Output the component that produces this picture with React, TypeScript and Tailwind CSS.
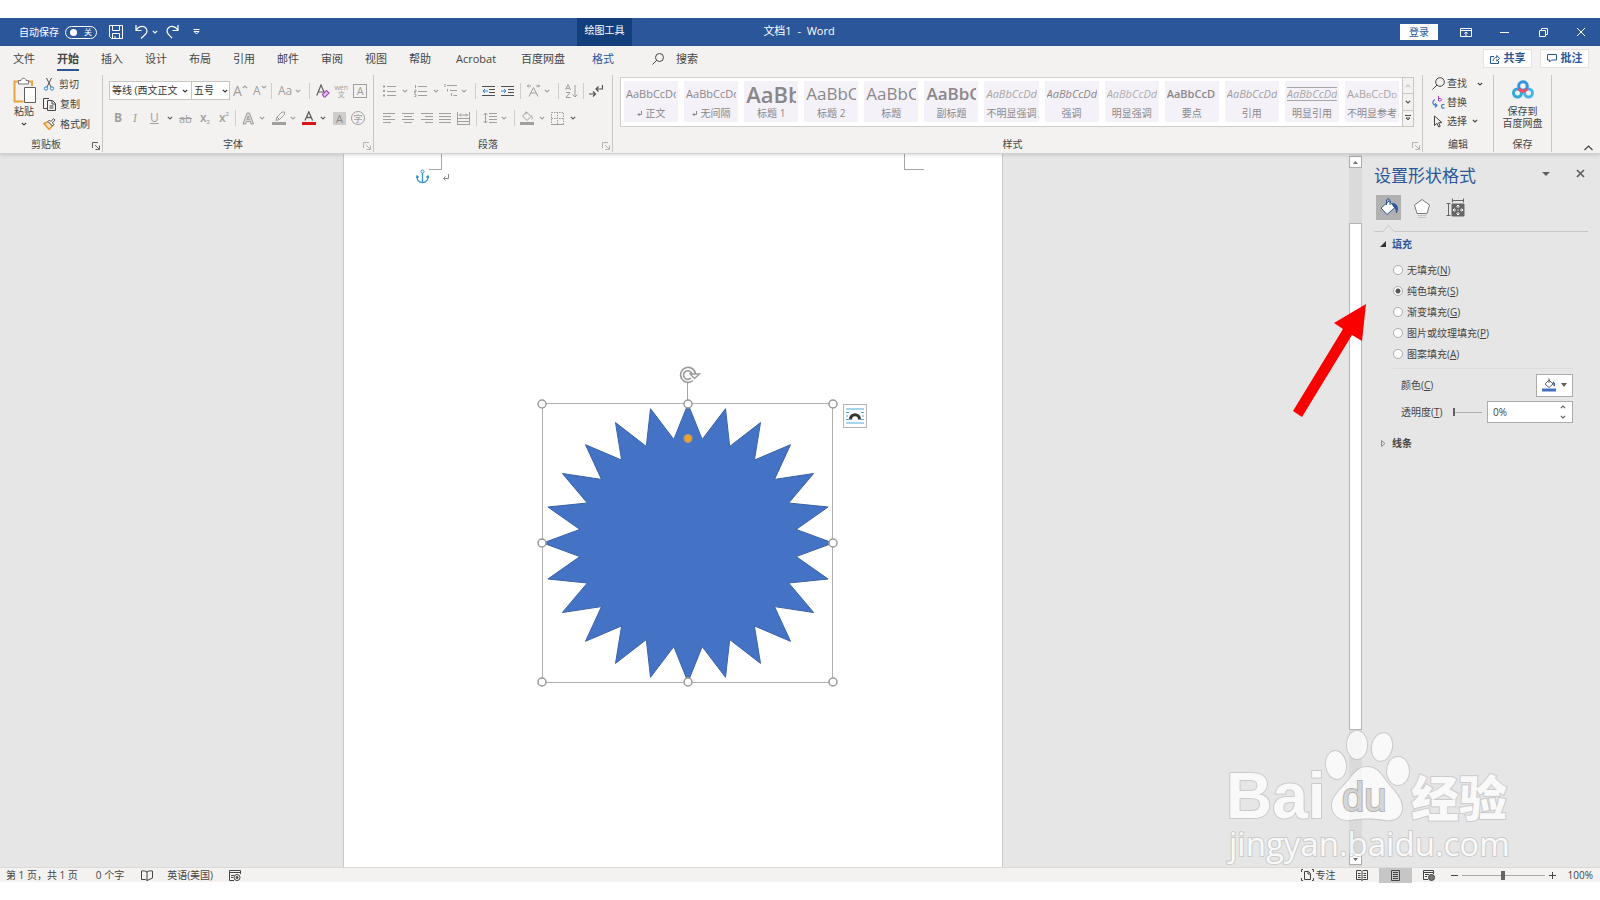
import { useState, type ReactNode } from "react";

const tabs = ["文件", "开始", "插入", "设计", "布局", "引用", "邮件", "审阅", "视图", "帮助"];

const styleCards = [
  { name: "正文", mark: true, sample: "AaBbCcDd", preview: "text-[11px]" },
  { name: "无间隔", mark: true, sample: "AaBbCcDd", preview: "text-[11px]" },
  { name: "标题 1", sample: "AaBb", preview: "text-[22px] font-semibold" },
  { name: "标题 2", sample: "AaBbC", preview: "text-[17px]" },
  { name: "标题", sample: "AaBbC", preview: "text-[17px]" },
  { name: "副标题", sample: "AaBbC", preview: "text-[17px] font-semibold" },
  { name: "不明显强调", sample: "AaBbCcDd", preview: "text-[11px] italic text-[#a8a5a8]" },
  { name: "强调", sample: "AaBbCcDd", preview: "text-[11px] italic" },
  { name: "明显强调", sample: "AaBbCcDd", preview: "text-[11px] italic text-[#b0adb0]" },
  { name: "要点", sample: "AaBbCcD", preview: "text-[11px] font-semibold" },
  { name: "引用", sample: "AaBbCcDd", preview: "text-[11px] italic text-[#a09da0]" },
  { name: "明显引用", sample: "AaBbCcDd", lined: true, preview: "text-[11px] italic text-[#a8a5a8]" },
  { name: "不明显参考", sample: "AaBbCcDd", preview: "text-[11px] text-[#a8a5a8] [font-variant:small-caps]" },
];

const fills = [
  { label: "无填充", hotkey: "N" },
  { label: "纯色填充", hotkey: "S" },
  { label: "渐变填充", hotkey: "G" },
  { label: "图片或纹理填充", hotkey: "P" },
  { label: "图案填充", hotkey: "A" },
];

function Icon({ w, h, className = "", children }: { w: number; h: number; className?: string; children: ReactNode }) {
  return (
    <svg
      width={w}
      height={h}
      viewBox={`0 0 ${w} ${h}`}
      fill="none"
      stroke="currentColor"
      className={`block shrink-0 ${className}`}
      aria-hidden="true"
    >
      {children}
    </svg>
  );
}

function Chevron({ className = "" }: { className?: string }) {
  return (
    <Icon w={6} h={4} className={className}>
      <path d="M.8.8 3 3 5.2.8" strokeWidth="1.1" />
    </Icon>
  );
}

function Tool({ label, className = "", children }: { label: string; className?: string; children: ReactNode }) {
  return (
    <button type="button" aria-label={label} className={`flex shrink-0 items-center ${className}`}>
      {children}
    </button>
  );
}

function Divider({ className = "" }: { className?: string }) {
  return <span className={`h-4 w-px shrink-0 bg-[#d0cecc] ${className}`} />;
}

function Launcher({ className = "text-[#b5b3b1]" }: { className?: string }) {
  return (
    <button type="button" aria-label="更多选项" className={`block ${className}`}>
      <Icon w={8} h={8}>
        <path d="M.5 6V.5H6M3 3l4 4M7.5 3.5v4h-4" />
      </Icon>
    </button>
  );
}

function Group({ label, className = "", launcher, children }: { label: string; className?: string; launcher?: ReactNode; children: ReactNode }) {
  return (
    <section className={`flex h-[77px] flex-col border-r border-[#c8c6c4] ${className}`}>
      <div className="flex-1">{children}</div>
      <div className="flex h-4 items-center">
        <span className="flex-1 text-center text-[10px]">{label}</span>
        {launcher && <span className="w-[10px] pt-1">{launcher}</span>}
      </div>
    </section>
  );
}

function TitleBar() {
  return (
    <header className="flex h-7 items-stretch bg-[#2b579a] text-[10px] text-white">
      <div className="flex flex-1 items-center">
        <div className="flex w-[577px] items-center pl-[19px]">
          <span id="autosave">自动保存</span>
          <button
            type="button"
            role="switch"
            aria-checked="false"
            aria-labelledby="autosave"
            className="ml-[6px] flex h-[13px] w-8 items-center justify-between rounded-full border border-white px-1 text-[8px] leading-none"
          >
            <span className="size-[7px] rounded-full bg-white" />关
          </button>
          <Tool label="保存" className="ml-3">
            <Icon w={14} h={14}>
              <path d="M.5.5h13v13h-11l-2-2zM3.5.5v5h7v-5M3.5 13.5v-5h7v5M6 13v-2" />
            </Icon>
          </Tool>
          <Tool label="撤消" className="ml-3 gap-1">
            <Icon w={13} h={14}>
              <path d="M1 0v5.500h5.500M1.300 5C3.500 1.500 7.500.5 10 2.300c2.500 2 2.500 5 .5 7L6 13.500" strokeWidth="1.200" />
            </Icon>
            <Chevron />
          </Tool>
          <Tool label="恢复" className="ml-[8px]">
            <Icon w={13} h={14}>
              <path d="M12 0v5.500H6.500M11.700 5C9.500 1.500 5.500.5 3 2.300c-2.500 2-2.500 5-.5 7L6 13" strokeWidth="1.200" />
            </Icon>
          </Tool>
          <Tool label="自定义快速访问工具栏" className="ml-[14px]">
            <Icon w={7} h={6}>
              <path d="M.5.5h6M1 2.500l2.500 2.500L6 2.500z" />
            </Icon>
          </Tool>
        </div>
        <div className="flex h-full w-[55px] items-center justify-center bg-[#133f7c] pb-[3px]">绘图工具</div>
      </div>
      <h1 className="ml-3 flex items-center pb-[2px] text-[11px] whitespace-pre">文档1  -  Word</h1>
      <div className="flex flex-1 items-center justify-end pr-[14px]">
        <button type="button" className="mr-[22px] h-4 w-[38px] bg-white leading-4 text-[#2b579a]">登录</button>
        <Tool label="功能区显示选项" className="mr-[28px]">
          <Icon w={12} h={9}>
            <path d="M.5.5h11v8H.5zM.5 2.500h11M6 8V4M4.300 5.500 6 4l1.700 1.500" />
          </Icon>
        </Tool>
        <Tool label="最小化" className="mr-[30px]">
          <Icon w={9} h={9}>
            <path d="M0 4.500h9" />
          </Icon>
        </Tool>
        <Tool label="向下还原" className="mr-[28px]">
          <Icon w={9} h={9}>
            <path d="M.5 2.500h6v6h-6zM2.500 2.500v-2h6v6h-2" />
          </Icon>
        </Tool>
        <Tool label="关闭">
          <Icon w={10} h={10}>
            <path d="M1 1l8 8M9 1 1 9" />
          </Icon>
        </Tool>
      </div>
    </header>
  );
}

function TabRow() {
  return (
    <nav className="flex h-[29px] items-start gap-[22px] pr-[11px] pl-[13px] text-[11px]">
      {tabs.map((tab) => (
        <a
          key={tab}
          href="#"
          className={
            tab === "开始"
              ? "mt-1 border-b-2 border-[#2b579a] pb-[2px] leading-[17px] font-bold"
              : "mt-1 leading-[17px]"
          }
        >
          {tab}
        </a>
      ))}
      <a href="#" className="mt-1 ml-[3px] leading-[17px]">Acrobat</a>
      <a href="#" className="mt-1 ml-[3px] leading-[17px]">百度网盘</a>
      <a href="#" className="mt-1 ml-[5px] leading-[17px] text-[#2b579a]">格式</a>
      <button type="button" className="mt-1 ml-4 flex items-center gap-3 leading-[17px]">
        <Icon w={12} h={12}>
          <circle cx="7.500" cy="4.500" r="4" />
          <path d="M4.700 7.300.5 11.500" />
        </Icon>
        搜索
      </button>
      <div className="mt-[3px] ml-auto flex gap-2 font-bold text-[#2b579a]">
        <button type="button" className="flex h-[19px] w-[49px] items-center justify-center gap-1 border border-[#e5e3e1] bg-white">
          <Icon w={10} h={10}>
            <path d="M4 2.500H.5v7h8V7M3 7c.3-2.500 1.700-3.500 3.800-3.500V1.500l2.700 3-2.700 2.700V5.300" />
          </Icon>
          共享
        </button>
        <button type="button" className="flex h-[19px] w-[49px] items-center justify-center gap-1 border border-[#e5e3e1] bg-white">
          <Icon w={10} h={9}>
            <path d="M.5.5h9v5.500H4.500L2.500 8V6h-2z" />
          </Icon>
          批注
        </button>
      </div>
    </nav>
  );
}

function Clipboard() {
  return (
    <Group label="剪贴板" className="w-[103px] shrink-0" launcher={<Launcher className="text-[#605e5c]" />}>
      <div className="flex">
        <button type="button" className="ml-3 flex w-6 flex-col items-center pt-[2px] text-[10px] leading-3">
          <Icon w={24} h={26}>
            <path d="M7 4.500H2.500v20h9M16 4.500h4V9" stroke="#e8a33d" strokeWidth="2" />
            <path d="M6.500 7V3.500H9c0-3 5-3 5 0h2.500V7z" fill="#fff" stroke="#767472" />
            <path d="M12.500 10.500h11v15h-11z" fill="#fff" stroke="#605e5c" />
          </Icon>
          <span className="mt-[2px]">粘贴</span>
          <Chevron className="mt-[5px]" />
        </button>
        <div className="ml-[7px] flex flex-col text-[10px]">
          <button type="button" className="flex h-[19px] items-center gap-1">
            <Icon w={12} h={13}>
              <path d="M3.500 0 8 9M8.500 0 4 9" stroke="#505050" />
              <circle cx="3" cy="10.500" r="1.700" stroke="#2b88c8" />
              <circle cx="9" cy="10.500" r="1.700" stroke="#2b88c8" />
            </Icon>
            剪切
          </button>
          <button type="button" className="flex h-5 items-center gap-1">
            <Icon w={13} h={13}>
              <path d="M4 10.500H.5V.5H6" />
              <path d="M4.500 2.500h5l3 3v7h-8zM9 3v3h3M6.500 8h4M6.500 10h4" />
            </Icon>
            复制
          </button>
          <button type="button" className="flex h-5 items-center gap-1">
            <Icon w={13} h={12}>
              <path d="M1 5.500 5.500 3.500 9.500 8 6 11.500z" fill="#fbe3bd" stroke="#e8922d" strokeWidth="1.400" />
              <path d="M5 3.500 9.500 8 11 6.500 9.300 5 12 2 10.500.7 8 3.500 6.500 2z" fill="#fff" stroke="#505050" />
            </Icon>
            格式刷
          </button>
        </div>
      </div>
    </Group>
  );
}

function FontGroup() {
  return (
    <Group label="字体" className="w-[271px] shrink-0" launcher={<Launcher />}>
      <div className="flex h-[27px] items-center pt-1 pl-[6px] text-[#a19f9d]">
        <div className="relative flex text-[#333]">
          <select aria-label="字体" className="h-[19px] w-[83px] appearance-none border border-[#c8c6c4] bg-white pl-[2px] text-[10px]">
            <option>等线 (西文正文</option>
          </select>
          <Chevron className="pointer-events-none absolute top-2 right-1" />
        </div>
        <div className="relative -ml-px flex text-[#333]">
          <select aria-label="字号" className="h-[19px] w-[39px] appearance-none border border-[#c8c6c4] bg-white pl-[2px] text-[10px]">
            <option>五号</option>
          </select>
          <Chevron className="pointer-events-none absolute top-2 right-[2px]" />
        </div>
        <Tool label="增大字号" className="ml-[3px] w-5 text-[14px] leading-none">
          A<Chevron className="mb-2 rotate-180" />
        </Tool>
        <Tool label="减小字号" className="w-[18px] text-[12px] leading-none">
          A<Chevron className="mb-2" />
        </Tool>
        <Divider />
        <Tool label="更改大小写" className="ml-[6px] gap-[3px] text-[12px] leading-none">
          Aa<Chevron />
        </Tool>
        <Divider className="ml-2" />
        <Tool label="清除所有格式" className="ml-[6px]">
          <Icon w={14} h={14}>
            <path d="M.8 11.500 5 1l3.500 8M2.300 8h5" stroke="#605e5c" strokeWidth="1.200" />
            <path d="m6.500 10.500 4-4 2.500 2.500-4 4H8z" fill="#e9cdf2" stroke="#a349b8" strokeWidth="1.200" />
          </Icon>
        </Tool>
        <Tool label="拼音指南" className="ml-1 w-[14px] flex-col text-[7px] leading-[7px]">
          <span>wén</span>
          <span>文</span>
        </Tool>
        <Tool label="字符边框" className="ml-[5px] size-[14px] justify-center border border-current text-[11px] leading-none">
          A
        </Tool>
      </div>
      <div className="mt-[3px] flex h-[26px] items-center pl-[11px] text-[12px] leading-none text-[#a19f9d]">
        <Tool label="加粗" className="w-[19px] font-bold">B</Tool>
        <Tool label="倾斜" className="w-[17px] font-serif italic">I</Tool>
        <Tool label="下划线" className="w-[27px] justify-between">
          <span className="underline">U</span>
          <Chevron className="mr-1 text-[#605e5c]" />
        </Tool>
        <Tool label="删除线" className="ml-[2px] w-[21px] text-[11px] line-through">ab</Tool>
        <Tool label="下标" className="w-[19px] font-semibold">
          x<span className="mt-2 text-[6px]">2</span>
        </Tool>
        <Tool label="上标" className="w-[16px] font-semibold">
          x<span className="mb-2 text-[6px]">2</span>
        </Tool>
        <Divider />
        <Tool label="文本效果" className="ml-[6px] gap-[4px]">
          <Icon w={13} h={13}>
            <path d="m1 12 4-11h2.500l4 11H9L8.200 9.500H4.500L3.600 12zM5.200 7.500h2.200L6.300 4z" fill="#d9d7d5" />
          </Icon>
          <Chevron />
        </Tool>
        <Tool label="文本突出显示颜色" className="ml-[7px] gap-[4px]">
          <Icon w={14} h={14}>
            <path d="M0 12.500h14" strokeWidth="3" />
            <path d="M4 9.500 5 6l5-5h2.500v2.500l-5 5zM5 6l2.500 2.500" />
          </Icon>
          <Chevron />
        </Tool>
        <Tool label="字体颜色" className="ml-[6px] gap-1 text-[#605e5c]">
          <Icon w={14} h={14}>
            <path d="M0 12.500h14" stroke="#d91616" strokeWidth="3" />
            <path d="M3 9.500 6.800.8l3.800 8.700M4.300 6.500h5" strokeWidth="1.300" />
          </Icon>
          <Chevron />
        </Tool>
        <Tool label="字符底纹" className="ml-[7px] size-[13px] justify-center bg-[#cfcdcb] text-[11px] text-[#8a8886]">A</Tool>
        <Tool label="带圈字符" className="ml-[5px] size-[14px] justify-center rounded-full border border-current text-[9px]">字</Tool>
      </div>
    </Group>
  );
}

function Lines({ d, h = 12 }: { d: string; h?: number }) {
  return (
    <Icon w={13} h={h}>
      <path d={d} />
    </Icon>
  );
}

function ParagraphGroup() {
  return (
    <Group label="段落" className="w-[239px] shrink-0" launcher={<Launcher />}>
      <div className="flex h-[27px] items-center pt-1 pl-[9px] text-[#a19f9d]">
        <Tool label="项目符号" className="gap-[6px]">
          <Icon w={13} h={12}>
            <path d="M0 1.500h2M0 6h2M0 10.500h2" strokeWidth="2" />
            <path d="M4 1.500h9M4 6.500h9M4 10.500h9" />
          </Icon>
          <Chevron />
        </Tool>
        <Tool label="编号" className="ml-[6px] gap-[6px]">
          <Icon w={13} h={12}>
            <path d="M1.500 0v3M.5 5h1.500v1.500H.5V8H2M.5 9.500H2v2H.5M4 1.500h9M4 6.500h9M4 10.500h9" />
          </Icon>
          <Chevron />
        </Tool>
        <Tool label="多级列表" className="ml-[5px] gap-[4px]">
          <Icon w={13} h={13}>
            <path d="M1 0v3M3 1.500h10M3.500 5v2.500M6 6.500h7M7.500 9v3M9.500 11.500H13" />
          </Icon>
          <Chevron />
        </Tool>
        <Divider className="ml-2" />
        <Tool label="减少缩进量" className="ml-[6px] text-[#505050]">
          <Icon w={13} h={12}>
            <path d="M0 1.500h13M7 4.500h6M7 7.500h6M0 10.500h13" />
            <path d="M6 6H1m2-2L1 6l2 2" stroke="#2b88d8" />
          </Icon>
        </Tool>
        <Tool label="增加缩进量" className="ml-[6px] text-[#505050]">
          <Icon w={13} h={12}>
            <path d="M0 1.500h13M7 4.500h6M7 7.500h6M0 10.500h13" />
            <path d="M0 6h5M3 4l2 2-2 2" stroke="#2b88d8" />
          </Icon>
        </Tool>
        <Divider className="ml-[6px]" />
        <Tool label="中文版式" className="ml-[6px] gap-[4px]">
          <Icon w={13} h={13}>
            <path d="m2 12.500 4.500-9 4.500 9M3.800 9h5.400M0 2h4M2 .5.500 2 2 3.500M13 2H9m2-1.500L12.500 2 11 3.500" />
          </Icon>
          <Chevron />
        </Tool>
        <Divider className="ml-2" />
        <Tool label="排序" className="ml-[6px]">
          <Icon w={13} h={14}>
            <path d="M.5 6 3 .5 5.500 6M1.300 4.300h3.400M1 8.500h4l-4 5h4.500M10 1v12M7.500 10.500 10 13l2.500-2.500" />
          </Icon>
        </Tool>
        <Divider className="ml-[5px]" />
        <Tool label="显示编辑标记" className="ml-[5px] text-[#505050]">
          <Icon w={14} h={14}>
            <path d="M0 10h6M4 7.500 6.500 10 4 12.500M13.500 1v4H7.500M9.500 2.500 7 5l2.500 2.500" strokeWidth="1.200" />
          </Icon>
        </Tool>
      </div>
      <div className="mt-[3px] flex h-[26px] items-center pl-[9px] text-[#a19f9d]">
        <Tool label="左对齐"><Lines d="M0 1.500h12M0 4.500h8M0 7.500h12M0 10.500h8" /></Tool>
        <Tool label="居中" className="ml-[6px]"><Lines d="M0 1.500h12M2 4.500h8M0 7.500h12M2 10.500h8" /></Tool>
        <Tool label="右对齐" className="ml-[6px]"><Lines d="M0 1.500h12M4 4.500h8M0 7.500h12M4 10.500h8" /></Tool>
        <Tool label="两端对齐" className="ml-[5px]"><Lines d="M0 1.500h12M0 4.500h12M0 7.500h12M0 10.500h12" /></Tool>
        <Tool label="分散对齐" className="ml-[5px]"><Lines h={13} d="M.5 0v13M12.500 0v13M2 3h9M4 1.500 2.500 3 4 4.500M9 1.500 10.500 3 9 4.500M1 6.500h11M1 9.500h11M1 12.500h11" /></Tool>
        <Divider className="ml-[6px]" />
        <Tool label="行和段落间距" className="ml-[6px] gap-1">
          <Icon w={14} h={12}>
            <path d="M2.500 1v10M.5 3l2-2 2 2M.5 9l2 2 2-2M6 1.500h8M6 4.500h8M6 7.500h8M6 10.500h8" />
          </Icon>
          <Chevron />
        </Tool>
        <Divider className="ml-[7px]" />
        <Tool label="底纹" className="ml-[5px] gap-[5px]">
          <Icon w={14} h={14}>
            <path d="M0 12.500h14" strokeWidth="3" />
            <path d="M6.500 1 11 5.500l-4 4L2.500 5zM6 .5v3M11 4.500c1.500 1 1.500 2.500 1 4" />
          </Icon>
          <Chevron />
        </Tool>
        <Tool label="边框" className="ml-[6px] gap-[6px]">
          <Icon w={13} h={13}>
            <path d="M.5.5h12v12H.5zM6.500.5v12M.5 6.500h12" strokeDasharray="1.500 1" />
            <path d="M0 12.500h13" />
          </Icon>
          <Chevron className="text-[#605e5c]" />
        </Tool>
      </div>
    </Group>
  );
}

function StylesGroup() {
  return (
    <Group label="样式" className="min-w-0 flex-1" launcher={<Launcher />}>
      <div className="mt-[2px] mr-2 ml-[7px] flex h-[50px] border border-[#d0cecc] bg-white">
        <div className="flex min-w-0 flex-1 gap-[6px] p-[3px]">
          {styleCards.map((card) => (
            <button key={card.name} type="button" className="flex h-[41px] min-w-0 flex-1 flex-col items-center bg-[#f5f1f8] text-[#8a878a]">
              <span className="flex h-[26px] w-full items-center overflow-hidden px-[2px]">
                <span
                  className={`w-full overflow-hidden text-left whitespace-nowrap ${card.preview} ${
                    card.lined ? "border-y border-[#a8a5a8] leading-3" : "leading-[26px]"
                  }`}
                >
                  {card.sample}
                </span>
              </span>
              <span className="flex items-center gap-1 text-[10px] leading-[13px] whitespace-nowrap">
                {card.mark && (
                  <Icon w={5} h={6}>
                    <path d="M4.500 0v3.500H1M2.500 2 1 3.500 2.500 5" />
                  </Icon>
                )}
                {card.name}
              </span>
            </button>
          ))}
        </div>
        <div className="-my-px -mr-px flex w-3 flex-col border border-[#c8c6c4] bg-[#f3f2f1] text-[#505050]">
          <button type="button" aria-label="上一行" className="flex flex-1 items-center justify-center text-[#c8c6c4]"><Chevron className="rotate-180" /></button>
          <button type="button" aria-label="下一行" className="flex flex-1 items-center justify-center border-y border-[#c8c6c4]"><Chevron /></button>
          <button type="button" aria-label="其他样式" className="flex flex-1 items-center justify-center">
            <Icon w={6} h={6}>
              <path d="M0 .5h6M1 3l2 2 2-2z" />
            </Icon>
          </button>
        </div>
      </div>
    </Group>
  );
}

function Ribbon() {
  return (
    <div className="relative z-10 border-b border-[#d2d0ce] bg-[#f3f2f1] text-[#444] shadow-[0_1px_4px_rgba(0,0,0,0.15)]">
      <TabRow />
      <div className="flex h-[78px]">
        <Clipboard />
        <FontGroup />
        <ParagraphGroup />
        <StylesGroup />
        <Group label="编辑" className="w-[71px] shrink-0">
          <div className="flex flex-col pl-[9px] text-[10px]">
            <button type="button" className="flex h-[17px] items-center gap-[2px]">
              <Icon w={13} h={13}>
                <circle cx="8" cy="5" r="4.300" />
                <path d="M5 8 .5 12.500" />
              </Icon>
              查找
              <Chevron className="ml-2" />
            </button>
            <button type="button" className="flex h-5 items-center gap-[2px]">
              <Icon w={13} h={13}>
                <path d="M6.500 0v5M6.500 2.500h1.500q1.500 0 1.500 1.200T8 5H6.500" stroke="#b146c2" />
                <path d="M12.500 8.500q-3-.5-3 1.800t3 1.700M3 3.500C0 5 0 9 4.500 9.500M3 7.500l2 2-2 2" stroke="#3d7fc4" strokeWidth="1.200" />
              </Icon>
              替换
            </button>
            <button type="button" className="flex h-[18px] items-center gap-[2px]">
              <Icon w={13} h={13}>
                <path d="M2.500 1v9.500L5 8.300l1.700 3.700 1.500-.7L6.600 7.700H10z" />
              </Icon>
              选择
              <Chevron className="ml-[3px]" />
            </button>
          </div>
        </Group>
        <Group label="保存" className="w-[58px] shrink-0">
          <button type="button" className="flex w-full flex-col items-center pt-[5px] text-[10px] leading-3">
            <Icon w={22} h={19}>
              <circle cx="5.500" cy="13" r="4" stroke="#2fa8e0" strokeWidth="3" />
              <circle cx="16.500" cy="13" r="4" stroke="#45b5e8" strokeWidth="3" />
              <circle cx="11" cy="6" r="4.300" stroke="#2f93e6" strokeWidth="3" />
              <path d="M7 8.500a4.300 4.300 0 0 0 8 0" stroke="#ee4f67" strokeWidth="3" />
            </Icon>
            <span className="mt-[6px]">保存到</span>
            <span>百度网盘</span>
          </button>
        </Group>
        <div className="flex w-[48px] shrink-0 items-end justify-end pr-[7px] pb-[2px]">
          <Tool label="折叠功能区">
            <Icon w={9} h={6}>
              <path d="m.5 5 4-4 4 4" strokeWidth="1.200" />
            </Icon>
          </Tool>
        </div>
      </div>
    </div>
  );
}

// 24-point star, inner radius is three quarters of the outer one
const starPoints = Array.from({ length: 48 }, (_, i) => {
  const k = i % 2 === 0 ? 1 : 0.752;
  const a = (i * Math.PI) / 24;
  return `${(146 + Math.sin(a) * 145 * k).toFixed(1)},${(174 - Math.cos(a) * 139 * k).toFixed(1)}`;
}).join(" ");

const handles = [
  [0, 35], [146, 35], [291, 35],
  [0, 174], [291, 174],
  [0, 313], [146, 313], [291, 313],
];

function Star() {
  return (
    <svg width="291" height="313" viewBox="0 0 291 313" className="absolute top-[215px] left-[198px] overflow-visible">
      <polygon points={starPoints} fill="#4472c4" stroke="#3a62a8" />
      <path d="M145.500 34V14" stroke="#a6a6a6" />
      <rect x=".5" y="34.500" width="290" height="279" fill="none" stroke="#b0b0b0" />
      {handles.map(([x, y]) => (
        <circle key={`${x}-${y}`} cx={x} cy={y} r="4" fill="#fff" stroke="#9a9a9a" strokeWidth="1.500" />
      ))}
      <circle cx="146" cy="69.500" r="4" fill="#eda12c" stroke="#a39a85" strokeWidth="1.200" />
      <g fill="none" stroke="#9b9b9b">
        <circle cx="146" cy="6" r="6.500" fill="#fff" stroke="none" />
        <path d="M153.500 5a7.500 7.500 0 1 0-2.500 6.500" strokeWidth="1.600" />
        <path d="M150 5a4.300 4.300 0 1 0-1 4" strokeWidth="1.600" />
        <path d="M148 5h9.500l-5 4.500z" fill="#fff" strokeWidth="1.300" />
      </g>
    </svg>
  );
}

function Page() {
  return (
    <article className="relative mx-auto h-full w-[660px] border-x border-[#c9c9c9] bg-white">
      <span className="absolute top-0 left-[78px] h-4 w-5 border-r border-b border-[#a6a6a6]" />
      <span className="absolute top-0 left-[560px] h-4 w-5 border-b border-l border-[#a6a6a6]" />
      <Icon w={13} h={15} className="absolute top-[15px] left-[72px] bg-white text-[#3a93cc]">
        <circle cx="6.500" cy="2.500" r="1.500" />
        <path d="M6.500 4v9.500M1 7.500c0 4 2 6 5.500 6s5.500-2 5.500-6M.3 9 1 7l1.700 1.500M12.700 9 12 7l-1.700 1.500" strokeWidth="1.300" />
      </Icon>
      <Icon w={8} h={8} className="absolute top-[20px] left-[98px] text-[#8a8a8a]">
        <path d="M6.500 0v4.500h-5M3.500 2.500l-2 2 2 2" />
      </Icon>
      <Star />
      <button type="button" aria-label="布局选项" className="absolute top-[250px] left-[499px] flex size-6 items-center justify-center border border-[#b4b4b4] bg-white">
        <Icon w={18} h={16}>
          <path d="M0 1h18M0 15h18" stroke="#4fa9d8" />
          <path d="M0 4.500h3M15 4.500h3M0 8h2M16 8h2M0 11.500h3M15 11.500h3" stroke="#4fa9d8" />
          <path d="M4.500 11.500c0-6.500 9-6.500 9 0" stroke="#333" strokeWidth="3" />
        </Icon>
      </button>
    </article>
  );
}

function ScrollBar() {
  return (
    <div className="flex w-[13px] shrink-0 flex-col bg-[#dadada] pt-[2px] text-[#707070]">
      <button type="button" aria-label="向上滚动" className="flex h-3 items-center justify-center border border-[#ababab] bg-white">
        <Icon w={5} h={3}><path d="M0 3 2.500 0 5 3z" fill="currentColor" stroke="none" /></Icon>
      </button>
      <div className="flex flex-1 flex-col">
        <div className="h-[8%]" />
        <div className="h-[74%] border border-[#b5b5b5] bg-white" />
      </div>
      <button type="button" aria-label="向下滚动" className="mb-[2px] flex h-3 items-center justify-center border border-[#ababab] bg-white">
        <Icon w={5} h={3}><path d="M0 0 2.500 3 5 0z" fill="currentColor" stroke="none" /></Icon>
      </button>
    </div>
  );
}

function FormatPane() {
  const [fill, setFill] = useState("S");

  return (
    <aside className="w-[238px] shrink-0 pt-3 pl-3 text-[10px] text-[#444]">
      <div className="flex h-5 items-center pr-[15px]">
        <h2 className="flex-1 text-[17px] leading-5 text-[#2b579a]">设置形状格式</h2>
        <Tool label="任务窗格选项" className="mb-1 text-[#606060]">
          <Icon w={8} h={4}><path d="M0 0h8L4 4z" fill="currentColor" stroke="none" /></Icon>
        </Tool>
        <Tool label="关闭窗格" className="mb-[5px] ml-[26px] text-[#606060]">
          <Icon w={9} h={9}><path d="m1 1 7 7M8 1 1 8" strokeWidth="1.700" /></Icon>
        </Tool>
      </div>
      <div className="mt-[9px] ml-[2px] flex h-[25px] items-center">
        <Tool label="填充与线条" className="size-[25px] justify-center bg-[#b1b1b1]">
          <Icon w={20} h={19}>
            <path d="m2 10 8-7 6 6.500-8 7z" fill="#fff" stroke="#2b579a" />
            <path d="M7.500 7V3c0-3 3.500-3 3.500 0v4" stroke="#2b579a" />
            <path d="M13.500 5.500c4.500 0 6 4 4 9.500 0-3-1-5-2.500-6z" fill="#2b579a" stroke="#2b579a" />
          </Icon>
        </Tool>
        <Tool label="效果" className="ml-3">
          <Icon w={18} h={20}>
            <path d="M9 1.500 16.500 7 14 15.500H4L1.500 7z" fill="#fff" stroke="#7a7a7a" />
            <path d="M4.500 17.500h9M5 19.500h8" stroke="#c4c4c4" />
          </Icon>
        </Tool>
        <Tool label="布局属性" className="ml-[15px] text-[#666]">
          <Icon w={19} h={19}>
            <path d="M6 2.500h12M6.500.5v4M17.500.5v4M2.500 5.500v12M.5 5.500h4M.5 17.500h4" />
            <path d="M6 6h12v12H6z" fill="#666" />
            <path d="M12 7v3M12 14v3M7 12h3M14 12h3M10.500 8.500 12 7l1.500 1.500M10.500 15.500 12 17l1.500-1.500M8.500 10.500 7 12l1.500 1.500M15.500 10.500 17 12l-1.500 1.500M11.500 12h1" stroke="#fff" />
          </Icon>
        </Tool>
      </div>
      <div className="mr-3 flex h-3 items-end">
        <span className="w-[9px] border-b border-[#c8c8c8]" />
        <Icon w={11} h={7}>
          <path d="m0 6.500 5.500-6 5.500 6" stroke="#c8c8c8" />
        </Icon>
        <span className="flex-1 border-b border-[#c8c8c8]" />
      </div>
      <button type="button" className="mt-1 ml-[6px] flex h-4 items-center gap-[6px] font-bold text-[#2b579a]">
        <Icon w={6} h={6}><path d="M6 0v6H0z" fill="#333" stroke="none" /></Icon>
        填充
      </button>
      <fieldset className="mt-[7px] ml-[19px]">
        <legend className="sr-only">填充</legend>
        {fills.map((f) => (
          <label key={f.hotkey} className="flex h-[21px] items-center gap-1 leading-none">
            <input
              type="radio"
              name="fill"
              checked={fill === f.hotkey}
              onChange={() => setFill(f.hotkey)}
              className="size-[10px] appearance-none rounded-full border border-[#ababab] bg-white checked:bg-[radial-gradient(circle,#555_2px,#fff_3px)]"
            />
            <span>{f.label}(<u>{f.hotkey}</u>)</span>
          </label>
        ))}
      </fieldset>
      <div className="mt-1 mr-[27px] ml-[19px] border-t border-[#dcdcdc]">
        <div className="mt-[5px] flex h-[22px] items-center justify-between pl-2">
          <span>颜色(<u>C</u>)</span>
          <Tool label="颜色" className="h-[23px] w-[37px] justify-center gap-[5px] border border-[#ababab] bg-white text-[#606060]">
            <Icon w={14} h={14}>
              <path d="M0 12h14" stroke="#4472c4" strokeWidth="3" />
              <path d="m3 6 4-4 4 4-4 3.500zM7 5V.5" stroke="#606060" />
              <path d="M11 4c1.500 1 1.500 2.500 1 4" stroke="#2b579a" strokeWidth="1.500" />
            </Icon>
            <Icon w={6} h={4}><path d="M0 0h6L3 4z" fill="currentColor" stroke="none" /></Icon>
          </Tool>
        </div>
        <div className="mt-[5px] flex h-[22px] items-center pl-2">
          <label htmlFor="opacity">透明度(<u>T</u>)</label>
          <input
            type="range"
            aria-label="透明度滑块"
            defaultValue="0"
            className="ml-auto h-2 w-[29px] appearance-none bg-[linear-gradient(#b0b0b0,#b0b0b0)] bg-[length:100%_1px] bg-center bg-no-repeat [&::-webkit-slider-thumb]:h-2 [&::-webkit-slider-thumb]:w-[2px] [&::-webkit-slider-thumb]:appearance-none [&::-webkit-slider-thumb]:bg-[#606060]"
          />
          <div className="ml-[5px] flex h-[22px] w-[86px] border border-[#ababab] bg-white">
            <input id="opacity" defaultValue="0%" className="w-0 flex-1 pl-[5px] text-[10px]" />
            <div className="flex w-3 flex-col text-[#606060]">
              <button type="button" aria-label="增加" className="flex flex-1 items-center"><Chevron className="rotate-180" /></button>
              <button type="button" aria-label="减少" className="flex flex-1 items-center"><Chevron /></button>
            </div>
          </div>
        </div>
      </div>
      <button type="button" className="mt-3 ml-[7px] flex h-4 items-center gap-[6px] font-bold">
        <Icon w={5} h={7}><path d="M.5.5v6l3.500-3z" stroke="#8a8a8a" /></Icon>
        线条
      </button>
    </aside>
  );
}

function Watermark() {
  return (
    <svg width="300" height="150" viewBox="0 0 300 150" className="pointer-events-none absolute right-[80px] bottom-[-10px]" aria-hidden="true">
      <g fill="#fff" stroke="#c4c4c4" strokeWidth="2" opacity=".78" className="[paint-order:stroke]">
        <text x="6" y="91" className="font-['Liberation_Sans'] text-[64px] font-bold">Bai</text>
        <ellipse cx="116" cy="38" rx="10" ry="14" transform="rotate(-8 116 38)" />
        <ellipse cx="137" cy="18" rx="10" ry="14" />
        <ellipse cx="162" cy="20" rx="10" ry="14" transform="rotate(12 162 20)" />
        <ellipse cx="178" cy="44" rx="11" ry="14" />
        <path d="M147 40c10 0 14 7 19 14s17 17 16 28c-1 9-8 12-17 11-11-2-24-2-34 0-10 1-18-4-19-13-1-10 9-18 15-25s10-15 20-15z" />
        <text x="122" y="84" fill="#d2d2d2" stroke="#a8a8a8" className="font-['Liberation_Sans'] text-[40px]">du</text>
        <text x="191" y="89" className="font-['Noto_Sans_CJK_SC'] text-[48px] font-black">经验</text>
        <text x="9" y="129" className="font-['Open_Sans'] text-[33px] font-medium">jingyan.baidu.com</text>
      </g>
    </svg>
  );
}

function StatusBar() {
  return (
    <footer className="relative flex h-[15px] items-center border-t border-[#dcdad8] bg-[#f3f2f1] pr-[7px] pl-[6px] text-[10px] leading-none text-[#444]">
      <span>第 1 页，共 1 页</span>
      <span className="ml-[18px]">0 个字</span>
      <Tool label="校对" className="ml-[17px]">
        <Icon w={12} h={11}><path d="M6 2v8.500M6 2C5 1 2 .5.5 1v8.500h4L6 10.500 11.500 8V1C9 .5 7 1 6 2z" /></Icon>
      </Tool>
      <button type="button" className="ml-[14px]">英语(美国)</button>
      <Tool label="宏录制" className="ml-4">
        <Icon w={12} h={11}>
          <path d="M5 10.500H.5V.5h11V4M.5 2.500h11M2 5.500h3M2 7.500h2" />
          <circle cx="8" cy="7.500" r="3" />
          <circle cx="8" cy="7.500" r="1" fill="currentColor" />
        </Icon>
      </Tool>
      <button type="button" className="ml-auto flex items-center gap-[2px]">
        <Icon w={13} h={12}>
          <path d="M3.500 2.500h4l2 2v6h-6zM7 3v2h2M.5 3V.5H2M11 .5h1.500V3M.5 9v2.500H2M11 11.500h1.500V9" />
        </Icon>
        专注
      </button>
      <Tool label="阅读视图" className="ml-5">
        <Icon w={12} h={11}>
          <path d="M6 1.500v9M.5.5H5l1 1 1-1h4.500v9H7l-1 1-1-1H.5zM2 3.500h2.500M2 5.500h2.500M2 7.500h2.500M7.500 3.500H10M7.500 5.500H10M7.500 7.500H10" />
        </Icon>
      </Tool>
      <Tool label="页面视图" className="ml-[11px] h-[15px] w-[33px] justify-center bg-[#c6c6c6]">
        <Icon w={9} h={11}>
          <path d="M.5.500h8v10h-8zM2 2.500h5M2 4.500h5M2 6.500h5M2 8.500h5" />
        </Icon>
      </Tool>
      <Tool label="Web 版式视图" className="ml-[11px]">
        <Icon w={12} h={11}>
          <path d="M5 9.500H.5v-9h10V4M.5 2.500h10M2 4.500h4M2 6.500h2" />
          <circle cx="8.500" cy="7.500" r="3" fill="#777" />
        </Icon>
      </Tool>
      <Tool label="缩小" className="ml-4 w-[7px]">
        <Icon w={7} h={7}><path d="M0 3.500h7" /></Icon>
      </Tool>
      <input
        type="range"
        aria-label="显示比例"
        min="10"
        max="190"
        defaultValue="100"
        className="mx-[4px] h-[9px] w-[83px] appearance-none bg-[linear-gradient(#a8a8a8,#a8a8a8)] bg-[length:100%_1px] bg-center bg-no-repeat [&::-webkit-slider-thumb]:h-[9px] [&::-webkit-slider-thumb]:w-1 [&::-webkit-slider-thumb]:appearance-none [&::-webkit-slider-thumb]:bg-[#666]"
      />
      <Tool label="放大" className="w-[7px]">
        <Icon w={7} h={7}><path d="M0 3.500h7M3.500 0v7" /></Icon>
      </Tool>
      <span className="ml-3">100%</span>
    </footer>
  );
}

export default function App() {
  return (
    <div className="flex min-h-screen flex-col bg-white py-[18px] font-['Open_Sans','Noto_Sans_CJK_SC',sans-serif]">
      <TitleBar />
      <Ribbon />
      <main className="relative flex flex-1 bg-[#e6e6e6]">
        <div className="min-w-0 flex-1 pr-[3px]">
          <Page />
        </div>
        <ScrollBar />
        <FormatPane />
        <Icon w={73} h={113} className="absolute top-[150px] right-[234px]">
          <path d="M73 0 69 37 59 31 9 113 0 107 50 25 41 19z" fill="#fb0000" stroke="none" />
        </Icon>
        <Watermark />
      </main>
      <StatusBar />
    </div>
  );
}
